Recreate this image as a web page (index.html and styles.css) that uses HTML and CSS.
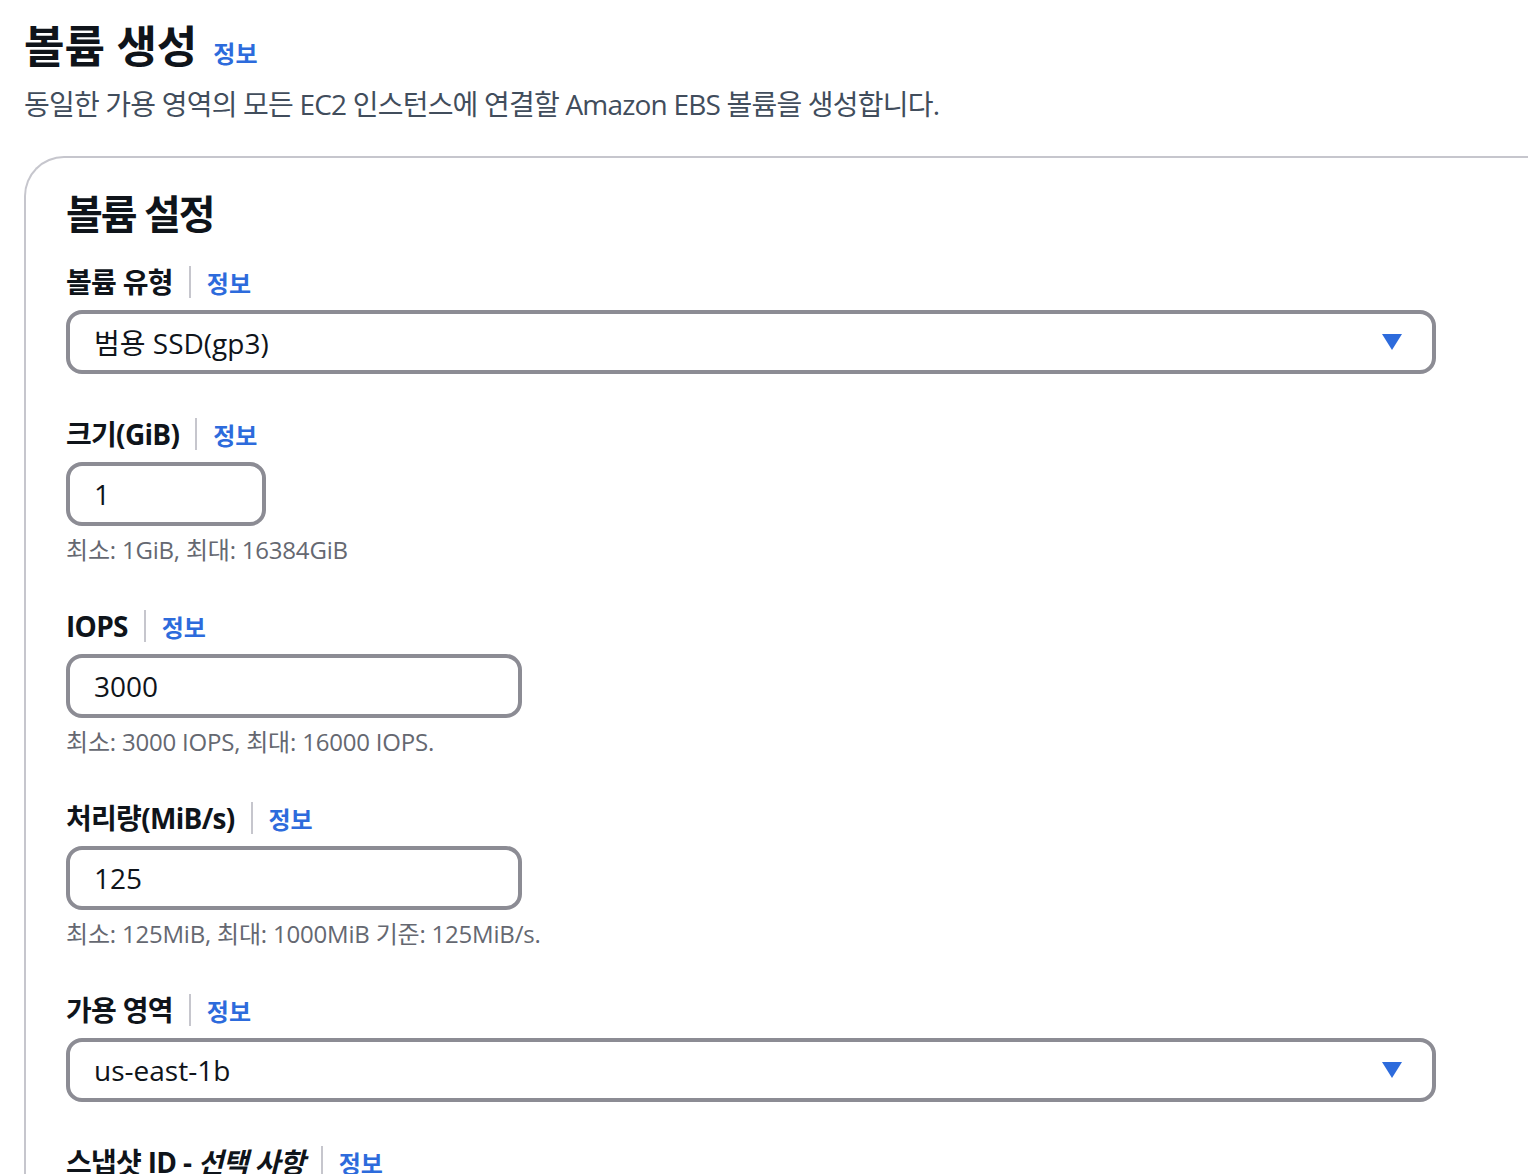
FILE: index.html
```html
<!DOCTYPE html>
<html lang="ko">
<head>
<meta charset="utf-8">
<title>볼륨 생성</title>
<link rel="stylesheet" href="styles.css">
</head>
<body>
<div class="page">
  <header class="page-header">
    <h1 class="title">볼륨 생성 <a class="info info-title" href="#">정보</a></h1>
    <p class="desc">동일한 가용 영역의 모든 EC2 인스턴스에 연결할 Amazon EBS 볼륨을 생성합니다.</p>
  </header>
  <section class="panel">
    <h2 class="panel-title">볼륨 설정</h2>

    <div class="field">
      <div class="label-row"><span class="label">볼륨 유형</span><span class="sep"></span><a class="info" href="#">정보</a></div>
      <div class="control select">
        <span class="value">범용 SSD(gp3)</span>
        <svg class="caret" width="20" height="16" viewBox="0 0 20 16"><path d="M0 0 H20 L10 16 Z" fill="#2d6bdc"/></svg>
      </div>
    </div>

    <div class="field">
      <div class="label-row"><span class="label">크기(GiB)</span><span class="sep"></span><a class="info" href="#">정보</a></div>
      <div class="control input small"><span class="value">1</span></div>
      <div class="hint">최소: 1GiB, 최대: 16384GiB</div>
    </div>

    <div class="field">
      <div class="label-row"><span class="label">IOPS</span><span class="sep"></span><a class="info" href="#">정보</a></div>
      <div class="control input medium"><span class="value">3000</span></div>
      <div class="hint">최소: 3000 IOPS, 최대: 16000 IOPS.</div>
    </div>

    <div class="field">
      <div class="label-row"><span class="label">처리량(MiB/s)</span><span class="sep"></span><a class="info" href="#">정보</a></div>
      <div class="control input medium"><span class="value">125</span></div>
      <div class="hint">최소: 125MiB, 최대: 1000MiB 기준: 125MiB/s.</div>
    </div>

    <div class="field">
      <div class="label-row"><span class="label">가용 영역</span><span class="sep"></span><a class="info" href="#">정보</a></div>
      <div class="control select">
        <span class="value">us-east-1b</span>
        <svg class="caret" width="20" height="16" viewBox="0 0 20 16"><path d="M0 0 H20 L10 16 Z" fill="#2d6bdc"/></svg>
      </div>
    </div>

    <div class="field">
      <div class="label-row"><span class="label">스냅샷 ID - <em>선택 사항</em></span><span class="sep"></span><a class="info" href="#">정보</a></div>
    </div>
  </section>
</div>
</body>
</html>
```

FILE: styles.css
```css
html, body {
  margin: 0;
  padding: 0;
  overflow: hidden;
  background: #ffffff;
}

body {
  font-family: "Open Sans", "Noto Sans CJK KR", sans-serif;
  color: #0f141a;
}

.page {
  padding: 18px 0 0 24px;
}

.title {
  margin: 0;
  font-size: 44px;
  line-height: 56px;
  font-weight: 700;
  color: #0f141a;
  display: flex;
  align-items: baseline;
  gap: 16px;
}

.info {
  color: #2d6bdc;
  text-decoration: none;
  font-weight: 700;
  font-size: 24px;
}

.info-title {
  font-size: 24px;
}

.desc {
  margin: 2px 0 0 0;
  font-size: 28px;
  line-height: 40px;
  color: #414d5c;
  letter-spacing: -0.8px;
}

.panel {
  margin-top: 32px;
  width: 1600px;
  border: 2px solid #c6c6cd;
  border-right: none;
  border-bottom: none;
  border-radius: 40px 0 0 0;
  padding: 28px 0 0 40px;
  min-height: 1100px;
  box-sizing: border-box;
}

.panel-title {
  margin: 0 0 20px 0;
  font-size: 40px;
  line-height: 56px;
  font-weight: 700;
  letter-spacing: -2px;
}

.field {
  margin-bottom: 40px;
}

.label-row {
  display: flex;
  align-items: center;
  height: 40px;
  margin-bottom: 8px;
}

.label {
  font-size: 28px;
  font-weight: 700;
  line-height: 40px;
  letter-spacing: -0.7px;
}

.label em {
  font-style: italic;
}

.sep {
  width: 2px;
  height: 32px;
  background: #c6c6cd;
  margin: 0 16px;
}

.control {
  box-sizing: border-box;
  height: 64px;
  border: 4px solid #8c8c94;
  border-radius: 16px;
  padding: 0 24px;
  display: flex;
  align-items: center;
  font-size: 28px;
  color: #0f141a;
}

.select {
  width: 1370px;
  justify-content: space-between;
  padding-right: 30px;
}

.small { width: 200px; }
.medium { width: 456px; }

.hint {
  margin-top: 8px;
  font-size: 24px;
  line-height: 32px;
  color: #656871;
  letter-spacing: -0.2px;
}
```
